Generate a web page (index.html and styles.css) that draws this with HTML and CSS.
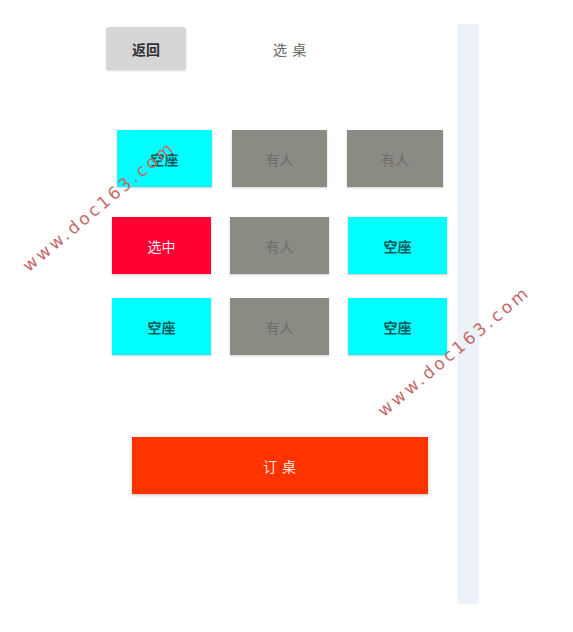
FILE: index.html
```html
<!DOCTYPE html>
<html>
<head>
<meta charset="utf-8">
<link rel="stylesheet" href="styles.css">
</head>
<body>
<div class="page">
  <div class="main">
    <div class="header">
      <div class="back">返回</div>
      <div class="title">选 桌</div>
    </div>
    <div class="row row1">
      <div class="seat free">空座</div>
      <div class="seat taken">有人</div>
      <div class="seat taken">有人</div>
    </div>
    <div class="row row2">
      <div class="seat picked">选中</div>
      <div class="seat taken">有人</div>
      <div class="seat free">空座</div>
    </div>
    <div class="row row3">
      <div class="seat free">空座</div>
      <div class="seat taken">有人</div>
      <div class="seat free">空座</div>
    </div>
    <div class="order">订 桌</div>
  </div>
  <div class="sidebar"></div>
</div>
<div class="wm wm1">www.doc163.com</div>
<div class="wm wm2">www.doc163.com</div>
</body>
</html>
```

FILE: styles.css
```css
html, body {
  margin: 0;
  padding: 0;
  background: #ffffff;
  font-family: "Noto Sans CJK SC", "Noto Sans", sans-serif;
}
.page {
  display: flex;
  width: 573px;
  height: 632px;
}
.main {
  width: 457px;
  display: flex;
  flex-direction: column;
}
.sidebar {
  width: 22px;
  height: 580px;
  margin-top: 24px;
  background: #edf1f8;
}
.header {
  display: flex;
  align-items: center;
  margin-top: 27px;
  height: 43px;
  padding-left: 106px;
}
.back {
  width: 80px;
  height: 43px;
  background: #d6d6d6;
  border-radius: 3px;
  box-shadow: 0 1px 2px rgba(0,0,0,0.15);
  display: flex;
  align-items: center;
  justify-content: center;
  font-size: 14px;
  font-weight: bold;
  color: #333;
}
.title {
  margin-left: 87px;
  font-size: 14px;
  color: #666;
  letter-spacing: 1px;
}
.row {
  display: flex;
}
.row1 {
  margin-top: 60px;
  padding-left: 117px;
  gap: 20px;
}
.row1 .seat { width: 95px; }
.row1 .seat:last-child { width: 96px; }
.row2 {
  margin-top: 30px;
  padding-left: 112px;
  gap: 19px;
}
.row3 {
  margin-top: 24px;
  padding-left: 112px;
  gap: 19px;
}
.row2 .seat, .row3 .seat { width: 99px; }
.seat {
  height: 57px;
  display: flex;
  align-items: center;
  justify-content: center;
  font-size: 14px;
  box-shadow: 0 1px 2px rgba(0,0,0,0.2);
}
.free {
  background: #00ffff;
  color: #0b5b5b;
  font-weight: bold;
}
.taken {
  background: #8b8a83;
  color: #6f6e69;
}
.picked {
  background: #ff0035;
  color: #ffe8ee;
}
.order {
  margin-top: 82px;
  margin-left: 132px;
  width: 296px;
  height: 57px;
  background: #ff3300;
  color: #ffe6dd;
  font-size: 14px;
  display: flex;
  align-items: center;
  justify-content: center;
  letter-spacing: 1px;
  box-shadow: 0 1px 3px rgba(0,0,0,0.25);
}
.wm {
  position: absolute;
  font-family: "DejaVu Sans", sans-serif;
  font-size: 17px;
  color: #c46a6a;
  letter-spacing: 3px;
  transform: rotate(-40deg);
  transform-origin: left center;
  white-space: nowrap;
}
.wm1 {
  left: 25px;
  top: 258px;
}
.wm2 {
  left: 380px;
  top: 403px;
}
```
